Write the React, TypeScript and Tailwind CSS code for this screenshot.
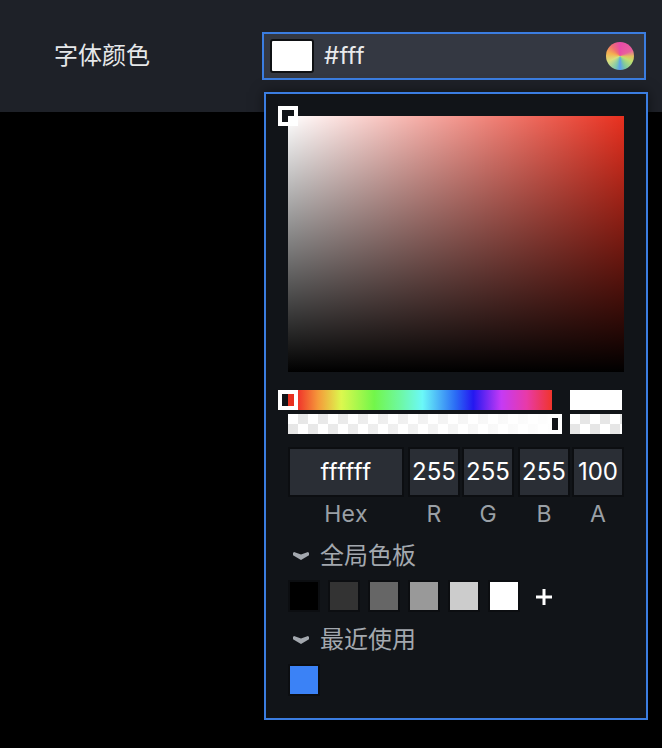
const font = { fontFamily: 'Inter, "Noto Sans CJK SC", sans-serif' };

const checker = {
  backgroundColor: "#fff",
  backgroundImage:
    "linear-gradient(45deg,#e6e6e6 25%,transparent 25%,transparent 75%,#e6e6e6 75%),linear-gradient(45deg,#e6e6e6 25%,transparent 25%,transparent 75%,#e6e6e6 75%)",
  backgroundSize: "20px 20px",
  backgroundPosition: "0 0,10px 10px",
};

function Chevron() {
  return (
    <svg width="16" height="8" viewBox="0 0 16 8" className="shrink-0">
      <path d="M1 0 L8 2.4 L15 0 L16 1 V3.2 L8 8 L0 3.2 V1 Z" fill="#a3a8ae" />
    </svg>
  );
}

function Heading({ children }: { children: string }) {
  return (
    <div className="flex h-8 items-center gap-[11px] pl-[5px] text-[24px] text-[#a3a8ae]">
      <Chevron />
      <span>{children}</span>
    </div>
  );
}

function Field({ value, label, className }: { value: string; label: string; className: string }) {
  return (
    <div className={className}>
      <div className="flex h-[50px] items-center justify-center border-2 border-[#0c0e11] bg-[#2a2e35] text-[24px] text-white">
        {value}
      </div>
      <div className="mt-px text-center text-[23px] leading-[32px] text-[#9aa0a6]">{label}</div>
    </div>
  );
}

function Swatch({ color }: { color: string }) {
  return <div className="box-content h-7 w-7 border-2 border-[#0c0e11]" style={{ backgroundColor: color }} />;
}

export default function App() {
  return (
    <div className="relative h-[748px] w-[662px] overflow-hidden bg-black" style={font}>
      <div className="flex h-[112px] items-start bg-[#1e2128] pl-[54px] pt-[32px]">
        <div className="w-[208px] text-[24px] leading-[48px] text-[#e6e8ea]">字体颜色</div>
        <div className="flex h-[48px] w-[384px] items-center border-2 border-[#3b7de0] bg-[#343842] pl-[6px] pr-[10px]">
          <div className="h-[34px] w-[44px] rounded-[3px] border-2 border-[#0f1114] bg-white" />
          <span className="ml-[10px] text-[24px] tracking-[0.2px] text-[#e8eaec]">#fff</span>
          <div
            className="ml-auto h-7 w-7 rounded-full"
            style={{
              background:
                "conic-gradient(#e84aa8 0deg,#e8609c 65deg,#e0c060 92deg,#c0e070 115deg,#7cc8a0 155deg,#5a9ef0 180deg,#7cc8b0 200deg,#d8e080 245deg,#f5b050 285deg,#f07070 320deg,#e84aa8 360deg)",
            }}
          />
        </div>
      </div>

      <div className="absolute left-[264px] top-[92px] h-[628px] w-[384px] border-2 border-[#3b7de0] bg-[#111418] px-[22px] pt-[22px] shadow-[0_0_12px_rgba(0,0,0,0.5)]">
        <div
          className="relative h-[256px] w-[336px]"
          style={{
            background:
              "linear-gradient(to top,#000,rgba(0,0,0,0)),linear-gradient(to right,#fff,rgba(255,255,255,0)),#e8301f",
          }}
        >
          <div className="absolute left-[-10px] top-[-10px] h-5 w-5 border-[4px] border-white bg-[#111418]">
            <div className="absolute bottom-0 right-0 h-[6px] w-[6px] bg-white" />
          </div>
        </div>

        <div className="mt-[18px] flex gap-[8px]">
          <div className="flex w-[274px] flex-col gap-[4px]">
            <div
              className="relative ml-[10px] h-5 w-[254px]"
              style={{
                background:
                  "linear-gradient(to right,#f0352b 0%,#f59a3a 8%,#dcf84e 17%,#72f64a 30%,#6ef8a0 40%,#6bf8f8 49%,#2b6cf5 62%,#2418f0 69%,#c53af5 80%,#e83aa8 90%,#f0352b 100%)",
              }}
            >
              <div className="absolute left-[-20px] top-0 flex h-5 w-5 border-[4px] border-white">
                <div className="w-1/2 bg-[#111418]" />
                <div className="w-1/2 bg-[#e8301f]" />
              </div>
            </div>
            <div className="relative h-5 w-[274px]" style={checker}>
              <div className="absolute inset-0 bg-gradient-to-r from-transparent to-white" />
              <div className="absolute right-1 top-1 h-3 w-[6px] bg-[#111418]" />
            </div>
          </div>
          <div className="flex w-[52px] flex-col gap-[4px]">
            <div className="h-5 bg-white" />
            <div className="h-5" style={checker} />
          </div>
        </div>

        <div className="mt-[13px] flex">
          <Field value="ffffff" label="Hex" className="w-[116px] tracking-[0.4px]" />
          <Field value="255" label="R" className="ml-1 w-[52px]" />
          <Field value="255" label="G" className="ml-[2px] w-[52px]" />
          <Field value="255" label="B" className="ml-1 w-[52px]" />
          <Field value="100" label="A" className="ml-[2px] w-[52px]" />
        </div>

        <div className="mt-[10px]">
          <Heading>全局色板</Heading>
        </div>
        <div className="mt-[8px] flex items-center gap-[8px]">
          {["#000000", "#333333", "#666666", "#999999", "#cccccc", "#ffffff"].map((c) => (
            <Swatch key={c} color={c} />
          ))}
          <svg width="18" height="18" viewBox="0 0 18 18" className="ml-[7px] mt-[2px]">
            <path d="M9 1 V17 M1 9 H17" stroke="#fff" strokeWidth="3" />
          </svg>
        </div>
        <div className="mt-[12px]">
          <Heading>最近使用</Heading>
        </div>
        <div className="mt-[8px]">
          <Swatch color="#3b82f6" />
        </div>
      </div>
    </div>
  );
}
